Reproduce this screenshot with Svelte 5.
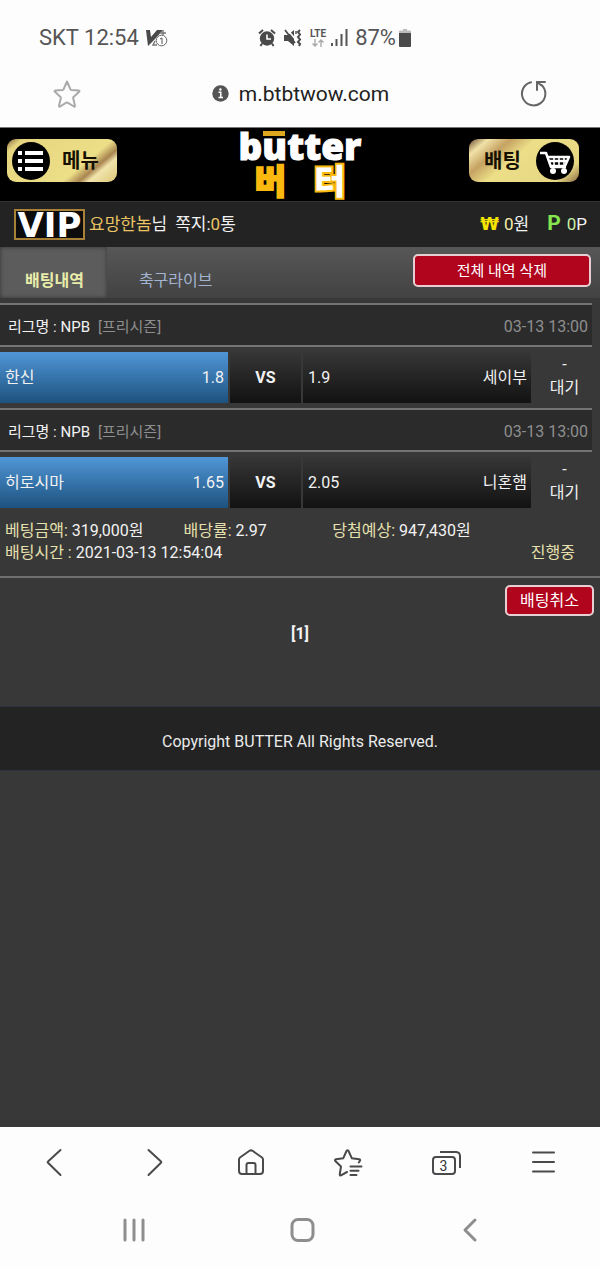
<script lang="ts">
	type Match = {
		id: number;
		league: string;
		season: string;
		date: string;
		home: string;
		homeOdds: string;
		away: string;
		awayOdds: string;
		score: string;
		status: string;
	};

	const matches: Match[] = [
		{
			id: 1,
			league: 'NPB',
			season: '프리시즌',
			date: '03-13 13:00',
			home: '한신',
			homeOdds: '1.8',
			away: '세이부',
			awayOdds: '1.9',
			score: '-',
			status: '대기',
		},
		{
			id: 2,
			league: 'NPB',
			season: '프리시즌',
			date: '03-13 13:00',
			home: '히로시마',
			homeOdds: '1.65',
			away: '니혼햄',
			awayOdds: '2.05',
			score: '-',
			status: '대기',
		},
	];

	const tabs = ['배팅내역', '축구라이브'];
	let activeTab = $state(0);
</script>

<div class="screen">
	<div class="status-bar">
		<div class="status-left">
			<span>SKT 12:54</span>
			<svg width="22" height="18" viewBox="0 0 22 18">
				<path d="M0 1h4l1 7 6-7h6L9 10l-7 7z" fill="#4a4a4a" />
				<path d="M17 1v5M14 4h6M9 12l-2 4h4" stroke="#777" stroke-width="1.4" fill="none" />
				<circle cx="15.500" cy="11.500" r="5.300" fill="#fff" stroke="#666" />
				<path d="M14 10l2-1v6" stroke="#555" fill="none" />
			</svg>
		</div>
		<div class="status-right">
			<svg width="18" height="18" viewBox="0 0 18 18">
				<circle cx="9" cy="9.500" r="7.200" fill="#4a4a4a" />
				<path d="M1 4.500l4-3.500M17 4.500L13 1M4 14.500l-1.500 2.500M14 14.500l1.500 2.500" stroke="#4a4a4a" stroke-width="2" />
				<path d="M9 5.500V10h4" stroke="#fff" stroke-width="1.600" fill="none" />
			</svg>
			<svg class="mute" width="18" height="18" viewBox="0 0 18 18">
				<path d="M0 6h4l6-5v16l-6-5H0z" fill="#4a4a4a" />
				<path d="M3 0l9 11" stroke="#fff" stroke-width="1.600" />
				<path d="M1 1l10 13" stroke="#4a4a4a" stroke-width="1.800" />
				<path d="M12 2v3" stroke="#4a4a4a" stroke-width="1.400" />
				<path d="M16 1l-2 2 2 2.500-2 2.500 2 2.500-2 2.500 2 2-1 2" stroke="#4a4a4a" stroke-width="2" fill="none" />
			</svg>
			<span class="lte">
				LTE
				<svg width="12" height="8" viewBox="0 0 12 8">
					<path d="M3 0v7M0.500 4.500L3 7l2.500-2.500M9 8V1M6.500 3.500L9 1l2.500 2.500" stroke="#aaa" stroke-width="1.400" fill="none" />
				</svg>
			</span>
			<svg class="signal" width="17" height="17" viewBox="0 0 17 17">
				<path d="M1 14v3M5.500 10v7M10.500 5v12M15.500 0v17" stroke="#555" stroke-width="2" />
			</svg>
			<span>87%</span>
			<svg class="battery" width="12" height="18" viewBox="0 0 12 18">
				<path d="M1 1.500h3V0h4v1.500h3q1 0 1 1V5H0V2.500q0-1 1-1z" fill="#bbb" />
				<path d="M0 4h12v13q0 1-1 1H1q-1 0-1-1z" fill="#4a4a4a" />
			</svg>
		</div>
	</div>

	<div class="url-bar">
		<button type="button" class="plain" aria-label="Bookmark">
			<svg width="28" height="28" viewBox="0 0 28 28">
				<path
					d="M14 1.500l3.400 7.700q.3.600 1 .7l7.300.6q1.300.3.400 1.300l-5.600 5.200q-.5.500-.3 1.200l1.800 7.500q.1 1.300-1 .8L14.600 22.600q-.6-.3-1.200 0L7 26.500q-1.200.500-1-.8l1.800-7.500q.2-.7-.3-1.200L1.900 11.800q-.9-1 .4-1.300l7.300-.6q.7-.1 1-.7z"
					fill="none" stroke="#aaa" stroke-width="2" stroke-linejoin="round"
				/>
			</svg>
		</button>
		<div class="address">
			<svg width="17" height="17" viewBox="0 0 17 17">
				<circle cx="8.500" cy="8.500" r="8.200" fill="#555" />
				<path d="M6.500 7.300h2.300v5M6.500 12.500h4.500" stroke="#fff" stroke-width="1.500" fill="none" />
				<circle cx="8.400" cy="4.500" r="1.200" fill="#fff" />
			</svg>
			<span>m.btbtwow.com</span>
		</div>
		<button type="button" class="plain" aria-label="Reload">
			<svg width="27" height="27" viewBox="0 0 27 27">
				<path d="M11 2.300A11.700 11.700 0 1 0 21.500 5M17 10V2H25M17 2l4.500 3.500" fill="none" stroke="#666" stroke-width="2" stroke-linecap="round" />
			</svg>
		</button>
	</div>

	<div class="site">
		<header>
			<button type="button" class="gold menu">
				<svg width="38" height="38" viewBox="0 0 38 38">
					<circle cx="19" cy="19" r="19" fill="#000" />
					<path d="M13 11h18M13 19h18M13 27h18" stroke="#fff" stroke-width="4" />
					<path d="M6 11h4M6 19h4M6 27h4" stroke="#fff" stroke-width="4" />
				</svg>
				<span>메뉴</span>
			</button>
			<a href="#home" class="logo">
				<span class="logo-en">b<span class="macron">u</span>tter</span>
				<span class="logo-ko"><span>버</span><span class="outlined">터</span></span>
			</a>
			<button type="button" class="gold cart">
				<span>배팅</span>
				<svg width="38" height="38" viewBox="0 0 38 38">
					<circle cx="19" cy="19" r="19" fill="#000" />
					<path d="M4 11h6l5 14h15M11 15h22l-4 9H14M12 19h20" fill="none" stroke="#fff" stroke-width="2.500" stroke-linejoin="round" />
					<path d="M18 15v9M23 15v9M28 15v9" stroke="#fff" stroke-width="1.600" />
					<circle cx="17" cy="29" r="3" fill="#fff" />
					<circle cx="28" cy="29" r="3" fill="#fff" />
				</svg>
			</button>
		</header>

		<div class="user-bar">
			<span class="vip">VIP</span>
			<span class="name"><b>요망한놈</b>님</span>
			<span class="notes">쪽지:<b>0</b>통</span>
			<span class="money"><i class="won">₩</i><em>0</em>원</span>
			<span class="points"><i>P</i><em>0</em>P</span>
		</div>

		<nav class="tabs">
			{#each tabs as tab, i}
				<button type="button" class="tab" class:active={i === activeTab} onclick={() => (activeTab = i)}>
					{tab}
				</button>
			{/each}
			<button type="button" class="red delete-all">전체 내역 삭제</button>
		</nav>

		<main>
			{#each matches as match (match.id)}
				<div class="league">
					<span>리그명 : {match.league}</span>
					<span class="season">[{match.season}]</span>
					<time>{match.date}</time>
				</div>
				<div class="match">
					<div class="team picked"><span>{match.home}</span><span>{match.homeOdds}</span></div>
					<div class="versus">VS</div>
					<div class="team"><span>{match.awayOdds}</span><span>{match.away}</span></div>
					<div class="result"><span>{match.score}</span><span>{match.status}</span></div>
				</div>
			{/each}

			<div class="summary">
				<div class="amounts">
					<span><b>베팅금액:</b> 319,000원</span>
					<span><b>배당률:</b> 2.97</span>
					<span><b>당첨예상:</b> 947,430원</span>
				</div>
				<div class="placed">
					<span><b>배팅시간 :</b> 2021-03-13 12:54:04</span>
					<b>진행중</b>
				</div>
			</div>

			<div class="actions">
				<button type="button" class="red cancel">배팅취소</button>
			</div>
			<div class="pages"><a href="#page-1">[1]</a></div>
		</main>

		<footer>Copyright BUTTER All Rights Reserved.</footer>
	</div>

	<div class="toolbar">
		<button type="button" class="plain" aria-label="Back">
			<svg width="30" height="30" viewBox="0 0 30 30"><path d="M21.500 3L9 14.500q-.7.600 0 1.200L21.500 28" /></svg>
		</button>
		<button type="button" class="plain" aria-label="Forward">
			<svg width="30" height="30" viewBox="0 0 30 30"><path d="M11.500 3L24 14.500q.7.600 0 1.200L11.500 28" /></svg>
		</button>
		<button type="button" class="plain" aria-label="Home">
			<svg width="30" height="30" viewBox="0 0 30 30">
				<path d="M4 12.500q0-1.200 1-2L14.500 3.800q1.500-1 3 0L27 10.500q1 .8 1 2V24q0 3-3 3H7q-3 0-3-3zM11.500 27v-9q0-2 2-2h5q2 0 2 2v9" />
			</svg>
		</button>
		<button type="button" class="plain" aria-label="Bookmarks">
			<svg width="30" height="30" viewBox="0 0 30 30">
				<path d="M14 25l-6 3.300q-1.500.500-1.200-1.300L8 19.500 2.300 14q-.9-1.400.7-1.800l7.300-1L13.500 4q1-1.300 2 0l3.300 7.200 7.500 1q1.500.500.500 1.800l-1 1.500M17.500 19.500h11M17.500 23.800h8M17.500 28h6" />
			</svg>
		</button>
		<button type="button" class="plain" aria-label="Tabs">
			<span class="tab-count">3</span>
		</button>
		<button type="button" class="plain" aria-label="Menu">
			<svg width="30" height="30" viewBox="0 0 30 30"><path d="M4 5.500h21M4 15h21M4 24.500h21" /></svg>
		</button>
	</div>

	<div class="system-nav">
		<button type="button" class="plain" aria-label="Recent apps">
			<svg width="26" height="26" viewBox="0 0 26 26"><path d="M4 3v20M13 3v20M22 3v20" /></svg>
		</button>
		<button type="button" class="plain" aria-label="Home screen">
			<svg width="26" height="26" viewBox="0 0 26 26"><rect x="3" y="2.500" width="21" height="21" rx="6" /></svg>
		</button>
		<button type="button" class="plain" aria-label="System back">
			<svg width="26" height="26" viewBox="0 0 26 26"><path d="M18 3L8 13l10 10" /></svg>
		</button>
	</div>
</div>

<style>
	:global(body) {
		background: #fdfdfd;
	}

	.screen {
		display: flex;
		flex-direction: column;
		min-height: 100vh;
		background: #fdfdfd;
		color: #f2f2f2;
		font-family: Roboto, 'Noto Sans CJK KR', sans-serif;
		font-size: 16px;
		line-height: 22px;
	}

	button {
		margin: 0;
		padding: 0;
		border: 0;
		font: inherit;
		cursor: pointer;
	}

	svg {
		display: block;
		flex-shrink: 0;
	}

	.plain {
		display: flex;
		justify-content: center;
		align-items: center;
		background: none;
	}

	.status-bar {
		display: flex;
		align-items: center;
		height: 60px;
		padding-top: 15px;
		box-sizing: border-box;
		color: #555;
		font-size: 22px;
	}

	.status-left,
	.status-right {
		display: flex;
		align-items: center;
	}

	.status-left {
		width: 43%;
		gap: 7px;
		padding-left: 39px;
		box-sizing: border-box;
	}

	.mute,
	.lte {
		margin-left: 8px;
	}

	.lte {
		display: flex;
		flex-direction: column;
		align-items: center;
		font-size: 10px;
		font-weight: 700;
		line-height: 10px;
	}

	.signal {
		margin: 0 7px 0 5px;
	}

	.battery {
		margin-left: 3px;
	}

	.url-bar {
		display: flex;
		justify-content: space-between;
		align-items: center;
		height: 67px;
		padding: 0 53px;
	}

	.address {
		display: flex;
		align-items: center;
		gap: 10px;
		color: #222;
		font-size: 21px;
	}

	.site {
		display: flex;
		flex: 1;
		flex-direction: column;
		background: #383838;
	}

	header {
		display: grid;
		grid-template-columns: 1fr auto 1fr;
		align-items: center;
		height: 74px;
		padding: 0 7px;
		border-top: 1px solid #777;
		box-sizing: border-box;
		background: #000;
	}

	.gold {
		display: flex;
		align-items: center;
		width: 110px;
		height: 43px;
		margin-bottom: 8px;
		border-radius: 9px;
		color: #151000;
		font-size: 20px;
		font-weight: 700;
	}

	.menu {
		gap: 12px;
		padding-left: 5px;
		background: linear-gradient(140deg, #8a6844 0, #e6d57e 10%, #ecdf88 66%, #a98450 76%, #f1e5ac 82%, #dcc676 100%);
	}

	.cart {
		justify-content: space-between;
		justify-self: end;
		margin-right: 14px;
		padding: 0 5px 0 15px;
		background: linear-gradient(140deg, #6b4a30 0, #f1e2a8 12%, #c5a262 26%, #ecdf88 42%, #e6d682 85%, #8a6844 100%);
	}

	.logo {
		display: flex;
		flex-direction: column;
		width: 128px;
		padding-bottom: 4px;
		color: #fff;
		text-decoration: none;
	}

	.logo-en {
		height: 32px;
		font-family: 'Open Sans', sans-serif;
		font-size: 37px;
		font-weight: 800;
		line-height: 32px;
		text-align: center;
		-webkit-text-stroke: 1px #fff;
	}

	.macron {
		position: relative;
	}

	.macron::before {
		position: absolute;
		top: 11px;
		left: 1px;
		width: 22px;
		height: 5px;
		background: #e0a81e;
		content: '';
	}

	.logo-ko {
		display: flex;
		justify-content: center;
		gap: 28px;
		height: 34px;
		color: #fbb90f;
		font-family: 'Noto Sans CJK KR', sans-serif;
		font-size: 34px;
		font-weight: 900;
		line-height: 36px;
		-webkit-text-stroke: 2px #fbb90f;
	}

	.outlined {
		color: #fff;
		paint-order: stroke fill;
		-webkit-text-stroke: 4px #fbb90f;
	}

	.user-bar {
		display: flex;
		align-items: center;
		height: 46px;
		padding: 0 13px 1px 14px;
		border-top: 1px solid #333;
		box-sizing: border-box;
		background: #232323;
		font-size: 17px;
	}

	.user-bar b {
		color: #e9c563;
		font-weight: 400;
	}

	.user-bar em,
	.user-bar i {
		font-style: normal;
	}

	.vip {
		width: 67px;
		height: 27px;
		margin-right: 4px;
		border: 2px solid #a98038;
		background: #0c0c0c;
		color: #fff;
		font-family: 'DejaVu Sans', sans-serif;
		font-size: 34px;
		font-weight: 700;
		line-height: 28px;
		text-align: center;
	}

	.name {
		margin-right: 8px;
	}

	.money {
		margin-left: auto;
	}

	.money em {
		color: #f6efaa;
	}

	.user-bar i {
		margin-right: 6px;
		color: #86e650;
		font-size: 21px;
		font-weight: 700;
		line-height: 20px;
	}

	.user-bar .won {
		margin-right: 5px;
		color: #f5e400;
		font-family: 'DejaVu Sans', sans-serif;
		font-size: 17px;
	}

	.points {
		margin-left: 18px;
	}

	.points em {
		color: #c8f0a8;
	}

	.tabs {
		display: flex;
		align-items: flex-start;
		height: 51px;
		margin-bottom: 5px;
		background: linear-gradient(#575757, #424242);
	}

	.tab {
		height: 51px;
		padding: 16px 32px 0;
		background: none;
		color: #a3b4d0;
	}

	.tab.active {
		padding: 16px 23px 0 25px;
		background: #5c5c5c;
		box-shadow: inset 0 0 4px #333;
		color: #e8edaa;
		font-weight: 700;
	}

	.red {
		border: 2px solid #e5cfd2;
		border-radius: 5px;
		background: #b1041d;
		color: #fff;
	}

	.delete-all {
		height: 33px;
		margin: 7px 9px 0 auto;
		padding: 0 42px;
		font-size: 15px;
	}

	.league {
		display: flex;
		align-items: center;
		gap: 8px;
		height: 44px;
		margin-right: 8px;
		padding: 4px 4px 0 8px;
		border: solid #747474;
		border-width: 2px 0;
		box-sizing: border-box;
		background: #2b2b2b;
		font-size: 15px;
	}

	.season,
	time {
		color: #8e8e8e;
	}

	time {
		margin-left: auto;
		font-size: 16px;
	}

	.match {
		display: grid;
		grid-template-columns: 1fr 71px 1fr 67px;
		gap: 2px;
		height: 51px;
		margin: 5px 0;
	}

	.team,
	.versus {
		display: flex;
		align-items: center;
		background: linear-gradient(#363636, #121212);
	}

	.team {
		justify-content: space-between;
		padding: 0 4px 0 5px;
	}

	.team.picked {
		background: linear-gradient(#5096d7, #1d527f);
	}

	.versus {
		justify-content: center;
		font-weight: 700;
	}

	.result {
		display: flex;
		flex-direction: column;
		justify-content: center;
		padding: 0 4px 4px 0;
		line-height: 23px;
		text-align: center;
	}

	.summary {
		padding: 7px 0 12px 5px;
		border-bottom: 2px solid #707070;
	}

	.summary b {
		color: #e6e0ae;
		font-weight: 400;
	}

	.amounts {
		display: grid;
		grid-template-columns: 30% 25% 1fr;
	}

	.placed {
		display: flex;
		justify-content: space-between;
		padding-right: 25px;
	}

	.actions {
		display: flex;
		justify-content: flex-end;
		padding: 7px 6px;
	}

	.cancel {
		height: 31px;
		padding: 0 13px;
	}

	.pages {
		padding-bottom: 61px;
		font-weight: 700;
		text-align: center;
	}

	.pages a {
		color: inherit;
		text-decoration: none;
	}

	footer {
		padding: 24px 0 17px;
		border: solid #2b3340;
		border-width: 1px 0;
		background: #232323;
		color: #eaeaea;
		text-align: center;
	}

	.toolbar {
		display: flex;
		height: 70px;
		padding: 0 7px 0 5px;
	}

	.toolbar .plain,
	.system-nav .plain {
		flex: 1;
	}

	.toolbar svg,
	.system-nav svg {
		fill: none;
		stroke: #4a4a4a;
		stroke-width: 2;
		stroke-linecap: round;
		stroke-linejoin: round;
	}

	.tab-count {
		position: relative;
		width: 20px;
		height: 15px;
		margin: 6px 5px 0 0;
		border: 2px solid #4a4a4a;
		border-radius: 4px;
		color: #333;
		font-size: 14px;
		line-height: 16px;
	}

	.tab-count::before {
		position: absolute;
		top: -7px;
		right: -7px;
		width: 19px;
		height: 15px;
		border: solid #4a4a4a;
		border-width: 2px 2px 0 0;
		border-radius: 0 5px 0 0;
		content: '';
	}

	.system-nav {
		display: flex;
		height: 70px;
		padding: 0 46px 4px 50px;
		box-sizing: border-box;
	}

	.system-nav svg {
		stroke: #8e8e8e;
		stroke-width: 3;
	}
</style>
